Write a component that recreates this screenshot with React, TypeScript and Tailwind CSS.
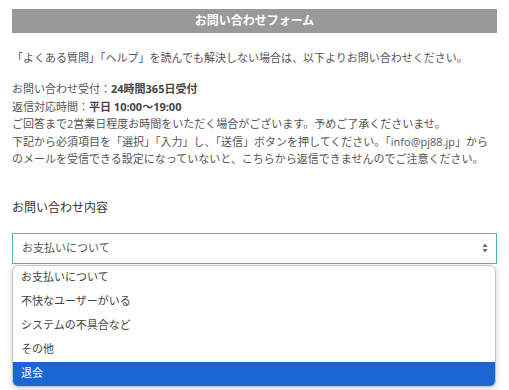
const options = ["お支払いについて", "不快なユーザーがいる", "システムの不具合など", "その他", "退会"];

function SortArrows() {
  return (
    <svg width="6" height="10" viewBox="0 0 6 10" className="text-[#666]">
      <path d="M3 0.5 L5.5 4 L0.5 4 Z" fill="currentColor" />
      <path d="M3 9.5 L5.5 6 L0.5 6 Z" fill="currentColor" />
    </svg>
  );
}

export default function App() {
  const selected = 4;

  return (
    <div
      className="min-h-[390px] w-[509px] bg-white px-3 pt-[9px] text-[#555]"
      style={{ fontFamily: '"Open Sans", "Noto Sans CJK JP", sans-serif' }}
    >
      <h2 className="flex h-6 items-center justify-center bg-[#999999] text-[12px] font-bold text-white">
        お問い合わせフォーム
      </h2>

      <p className="mt-[16px] text-[11px] leading-[17.5px]">
        「よくある質問」「ヘルプ」を読んでも解決しない場合は、以下よりお問い合わせください。
      </p>

      <div className="mt-[13.5px] text-[11px] leading-[17.5px]">
        <p>
          お問い合わせ受付：<b className="text-[#444]">24時間365日受付</b>
        </p>
        <p>
          返信対応時間：<b className="text-[#444]">平日 10:00〜19:00</b>
        </p>
        <p>ご回答まで2営業日程度お時間をいただく場合がございます。予めご了承くださいませ。</p>
        <p>
          下記から必須項目を「選択」「入力」し、「送信」ボタンを押してください。「info@pj88.jp」からのメールを受信できる設定になっていないと、こちらから返信できませんのでご注意ください。
        </p>
      </div>

      <label className="mt-[31px] block text-[12px] leading-[18px] text-[#333]">お問い合わせ内容</label>

      <div className="relative mt-4">
        <div className="flex h-[31px] items-center justify-between border border-[#4fb9b9] bg-white pr-[8px] pl-[9px] text-[11px]">
          <span>{options[0]}</span>
          <SortArrows />
        </div>

        <ul className="absolute top-[32px] right-px left-0 overflow-hidden rounded-[6px] border border-[#c4c4c4] bg-white shadow-[0_2px_6px_rgba(0,0,0,0.18)]">
          {options.map((option, index) => (
            <li
              key={option}
              className={
                index === selected
                  ? "flex h-6 items-center bg-[#1a66d2] pl-[8px] text-[11px] text-white"
                  : "flex h-6 items-center pl-[8px] text-[11px] text-[#444]"
              }
            >
              {option}
            </li>
          ))}
        </ul>
      </div>
    </div>
  );
}
